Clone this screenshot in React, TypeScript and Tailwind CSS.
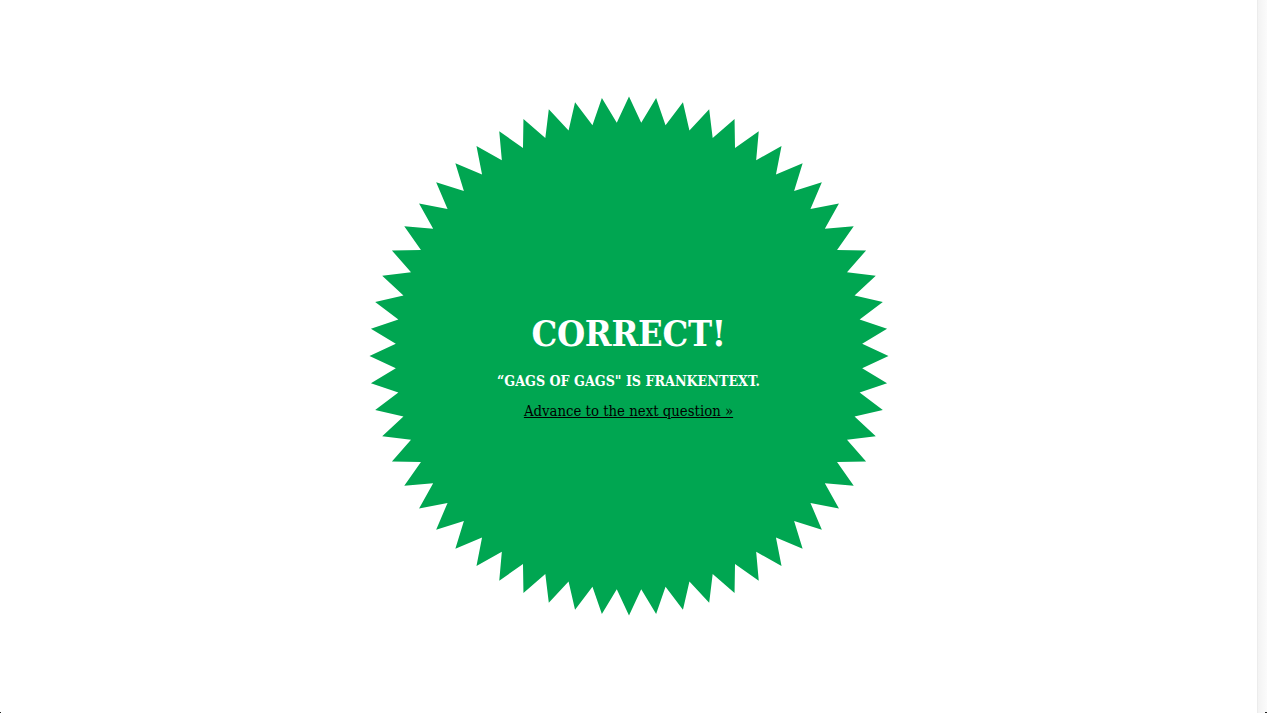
import React from 'react';

const OUTER = 259.5;
const INNER = 233.5;
const TIPS = 60;
const CX = 260;
const CY = 260;

const starPoints = () => {
  const pts: string[] = [];
  for (let i = 0; i < TIPS * 2; i++) {
    const r = i % 2 === 0 ? OUTER : INNER;
    const a = (Math.PI * i) / TIPS;
    pts.push(`${(CX + r * Math.sin(a)).toFixed(2)},${(CY - r * Math.cos(a)).toFixed(2)}`);
  }
  return pts.join(' ');
};

const App: React.FC = () => {
  return (
    <div className="relative flex h-[713px] w-full overflow-hidden bg-white font-['DejaVu_Serif_Condensed','DejaVu_Serif',serif]">
      <main className="flex flex-1 items-start justify-center pt-[96px]">
        <div className="relative flex h-[520px] w-[520px] flex-col items-center pt-[213px] text-center">
          <svg className="absolute inset-0" width="520" height="520" viewBox="0 0 520 520">
            <polygon points={starPoints()} fill="#00a651" />
          </svg>
          <h1 className="relative text-[36px] font-bold leading-[48px] tracking-[-0.3px] text-white">CORRECT!</h1>
          <p className="relative mt-[14px] text-[14.15px] font-bold leading-[20px] text-white">
            “GAGS OF GAGS" IS FRANKENTEXT.
          </p>
          <a href="#" className="relative mt-[9px] text-[14.8px] leading-[22px] text-black underline">
            Advance to the next question »
          </a>
        </div>
      </main>
      <aside className="w-[10px] border-l border-[#ececec] bg-gradient-to-r from-[#f3f3f3] to-[#fbfbfb]" />
      <span className="absolute bottom-0 left-0 h-px w-px bg-[#222222]" />
      <span className="absolute bottom-0 right-0 h-px w-[2px] bg-[#222222]" />
    </div>
  );
};

export default App;
